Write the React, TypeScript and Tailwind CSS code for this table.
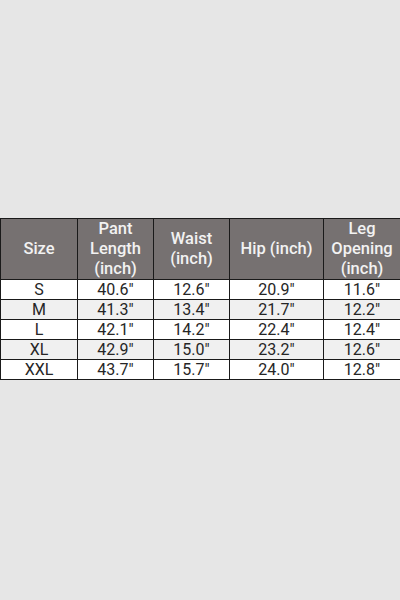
import React from "react";

const rows = [
  ["S", '40.6"', '12.6"', '20.9"', '11.6"'],
  ["M", '41.3"', '13.4"', '21.7"', '12.2"'],
  ["L", '42.1"', '14.2"', '22.4"', '12.4"'],
  ["XL", '42.9"', '15.0"', '23.2"', '12.6"'],
  ["XXL", '43.7"', '15.7"', '24.0"', '12.8"'],
];

export default function App() {
  return (
    <div className="w-[400px] h-[600px] bg-[#e6e6e6] pt-[218px]" style={{ fontFamily: "Roboto, 'DejaVu Sans', sans-serif" }}>
      <table className="w-[400px] border-collapse table-fixed">
        <colgroup>
          <col className="w-[77px]" />
          <col className="w-[76px]" />
          <col className="w-[76px]" />
          <col className="w-[94px]" />
          <col className="w-[77px]" />
        </colgroup>
        <thead>
          <tr className="h-[61px] bg-[#767171] text-[#f2f2f2]">
            {["Size", "Pant Length (inch)", "Waist (inch)", "Hip (inch)", "Leg Opening (inch)"].map((h, i) => (
              <th key={i} className="border border-[#1a1a1a] font-medium text-[16.5px] leading-[20px] text-center p-0">
                {h === "Pant Length (inch)" ? (<>Pant<br />Length<br />(inch)</>) : h === "Leg Opening (inch)" ? (<>Leg<br />Opening<br />(inch)</>) : h === "Waist (inch)" ? (<>Waist<br />(inch)</>) : h}
              </th>
            ))}
          </tr>
        </thead>
        <tbody>
          {rows.map((r, i) => (
            <tr key={i} className={`h-[20px] ${i % 2 === 0 ? "bg-white" : "bg-[#f0f0f0]"}`}>
              {r.map((c, j) => (
                <td key={j} className="border border-[#1a1a1a] text-center text-[16px] leading-[18px] text-[#262626] p-0">{c}</td>
              ))}
            </tr>
          ))}
        </tbody>
      </table>
    </div>
  );
}
